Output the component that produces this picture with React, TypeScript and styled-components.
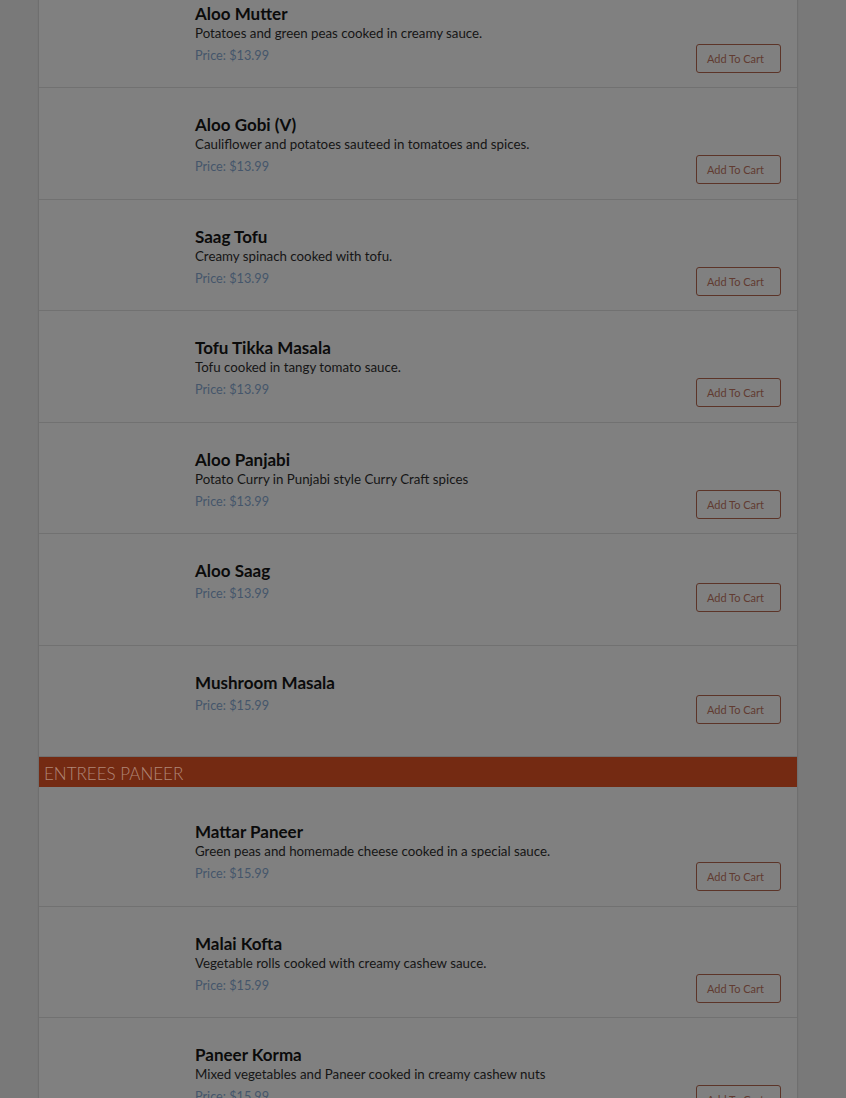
import * as React from "react";
import styled, { createGlobalStyle } from "styled-components";

const GlobalStyle = createGlobalStyle`
  html, body {
    margin: 0;
    padding: 0;
    background: #797979;
    overflow: hidden;
  }
  body {
    font-family: Lato, "Noto Sans", sans-serif;
  }
`;

const Page = styled.div`
  width: 846px;
  height: 1098px;
  overflow: hidden;
`;

const Menu = styled.div`
  width: 758px;
  margin: -23.5px 0 0 39px;
  background: #808080;
  box-shadow: 0 0 2px rgba(0, 0, 0, 0.25);
`;

const Row = styled.div`
  display: flex;
  box-sizing: border-box;
  height: 111.5px;
  padding: 27px 16px 0 0;
  border-bottom: 1px solid #717171;
`;

const Thumb = styled.div`
  width: 156px;
  flex: none;
`;

const Info = styled.div`
  flex: 1;
`;

const Title = styled.div`
  font-size: 17px;
  font-weight: 700;
  line-height: 20px;
  color: #0b0b0b;
`;

const Description = styled.div`
  font-size: 13.3px;
  line-height: 19px;
  color: #151515;
  margin-bottom: 2px;
`;

const Spacer = styled.div`
  height: 2px;
`;

const Price = styled.div`
  font-size: 12.7px;
  line-height: 21px;
  color: #45566b;
`;

const CartButton = styled.button<{ $offset: number }>`
  flex: none;
  box-sizing: border-box;
  width: 85px;
  height: 29px;
  margin-top: ${(p) => p.$offset}px;
  padding: 0 6px 0 0;
  border: 1px solid #5c3428;
  border-radius: 3px;
  background: transparent;
  color: #613b31;
  font-family: Lato, "Noto Sans", sans-serif;
  font-size: 11px;
  text-align: center;
`;

const Section = styled.div`
  height: 30px;
  box-sizing: border-box;
  display: flex;
  align-items: center;
  padding: 3px 0 0 5px;
  background: #742a12;
  color: #b08677;
  font-size: 17px;
  font-weight: 300;
  margin-bottom: 8px;
`;

type Dish = { name: string; desc?: string; price: string };

const vegan: Dish[] = [
  { name: "Aloo Mutter", desc: "Potatoes and green peas cooked in creamy sauce.", price: "$13.99" },
  { name: "Aloo Gobi (V)", desc: "Cauliflower and potatoes sauteed in tomatoes and spices.", price: "$13.99" },
  { name: "Saag Tofu", desc: "Creamy spinach cooked with tofu.", price: "$13.99" },
  { name: "Tofu Tikka Masala", desc: "Tofu cooked in tangy tomato sauce.", price: "$13.99" },
  { name: "Aloo Panjabi", desc: "Potato Curry in Punjabi style Curry Craft spices", price: "$13.99" },
  { name: "Aloo Saag", price: "$13.99" },
  { name: "Mushroom Masala", price: "$15.99" },
];

const paneer: Dish[] = [
  { name: "Mattar Paneer", desc: "Green peas and homemade cheese cooked in a special sauce.", price: "$15.99" },
  { name: "Malai Kofta", desc: "Vegetable rolls cooked with creamy cashew sauce.", price: "$15.99" },
  { name: "Paneer Korma", desc: "Mixed vegetables and Paneer cooked in creamy cashew nuts", price: "$15.99" },
];

const DishRow = ({ dish }: { dish: Dish }) => (
  <Row>
    <Thumb />
    <Info>
      <Title>{dish.name}</Title>
      {dish.desc ? <Description>{dish.desc}</Description> : <Spacer />}
      <Price>Price: {dish.price}</Price>
    </Info>
    <CartButton $offset={dish.desc ? 40 : 22}>Add To Cart</CartButton>
  </Row>
);

export default function App() {
  return (
    <Page>
      <GlobalStyle />
      <Menu>
        {vegan.map((d) => (
          <DishRow key={d.name} dish={d} />
        ))}
        <Section>ENTREES PANEER</Section>
        {paneer.map((d) => (
          <DishRow key={d.name} dish={d} />
        ))}
      </Menu>
    </Page>
  );
}
